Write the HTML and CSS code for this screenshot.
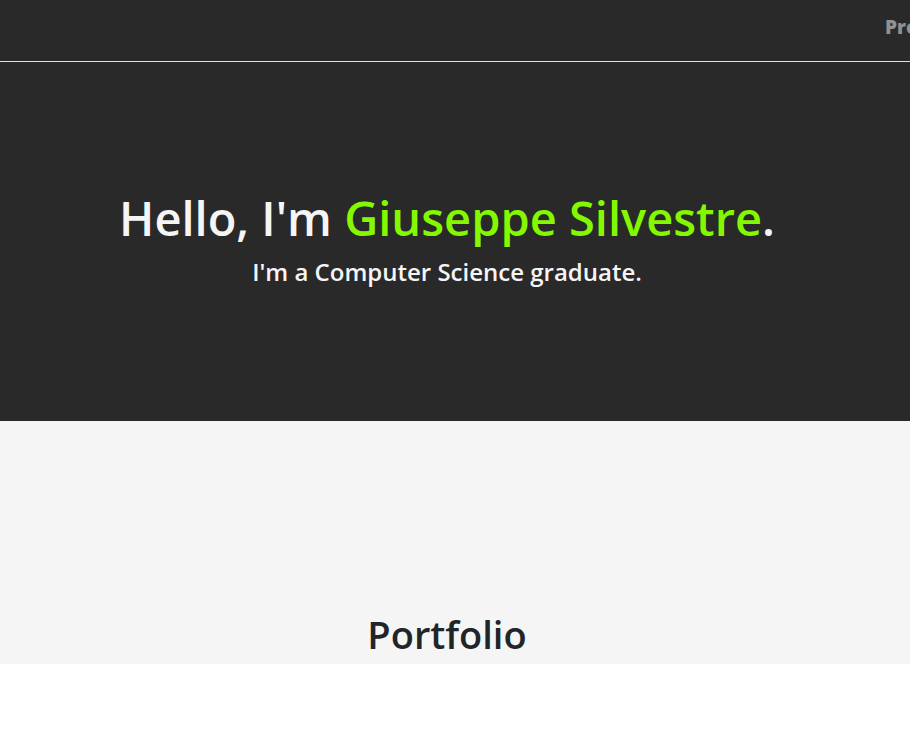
FILE: index.html
```html
<!DOCTYPE html>
<html lang="en">
<head>
<meta charset="utf-8">
<meta name="viewport" content="width=device-width, initial-scale=1">
<title>Giuseppe Silvestre</title>
<link rel="stylesheet" href="styles.css">
</head>
<body>
<header class="navbar">
  <nav class="nav"><a class="nav-link" href="#portfolio">Projects</a></nav>
</header>
<main>
  <section class="hero">
    <h1 class="hero-title">Hello, I'm <span class="name">Giuseppe Silvestre</span>.</h1>
    <p class="hero-text">I'm a Computer Science graduate.</p>
  </section>
  <section class="portfolio" id="portfolio">
    <h2 class="portfolio-title">Portfolio</h2>
  </section>
</main>
</body>
</html>
```

FILE: styles.css
```css
* { box-sizing: border-box; }
body {
  margin: 0;
  background: #fff;
  color: #212529;
  font-family: "Segoe UI", "Open Sans", "Noto Sans", sans-serif;
  overflow-x: hidden;
}
h1, h2, p { margin: 0; }
.navbar {
  background: #292929;
  border-bottom: 1px solid #dee2e6;
  padding: 15px 0 22px;
  overflow: hidden;
}
.nav { margin-left: calc(100% - 25px); }
.nav-link {
  display: block;
  color: #919191;
  font-size: 19px;
  line-height: 24px;
  font-weight: 800;
  text-decoration: none;
  white-space: nowrap;
}
.hero {
  background: #292929;
  color: #f5f5f5;
  padding: 126px 16px 133px 0;
  text-align: center;
}
.hero-title {
  font-size: 47px;
  line-height: 60px;
  font-weight: 600;
}
.name { color: #84f800; }
.hero-text {
  margin-top: 8px;
  font-size: 24px;
  line-height: 32px;
  font-weight: 600;
}
.portfolio {
  background: #f5f5f5;
  padding: 189px 16px 6px 0;
  text-align: center;
}
.portfolio-title {
  font-size: 38px;
  line-height: 48px;
  font-weight: 600;
}
```
